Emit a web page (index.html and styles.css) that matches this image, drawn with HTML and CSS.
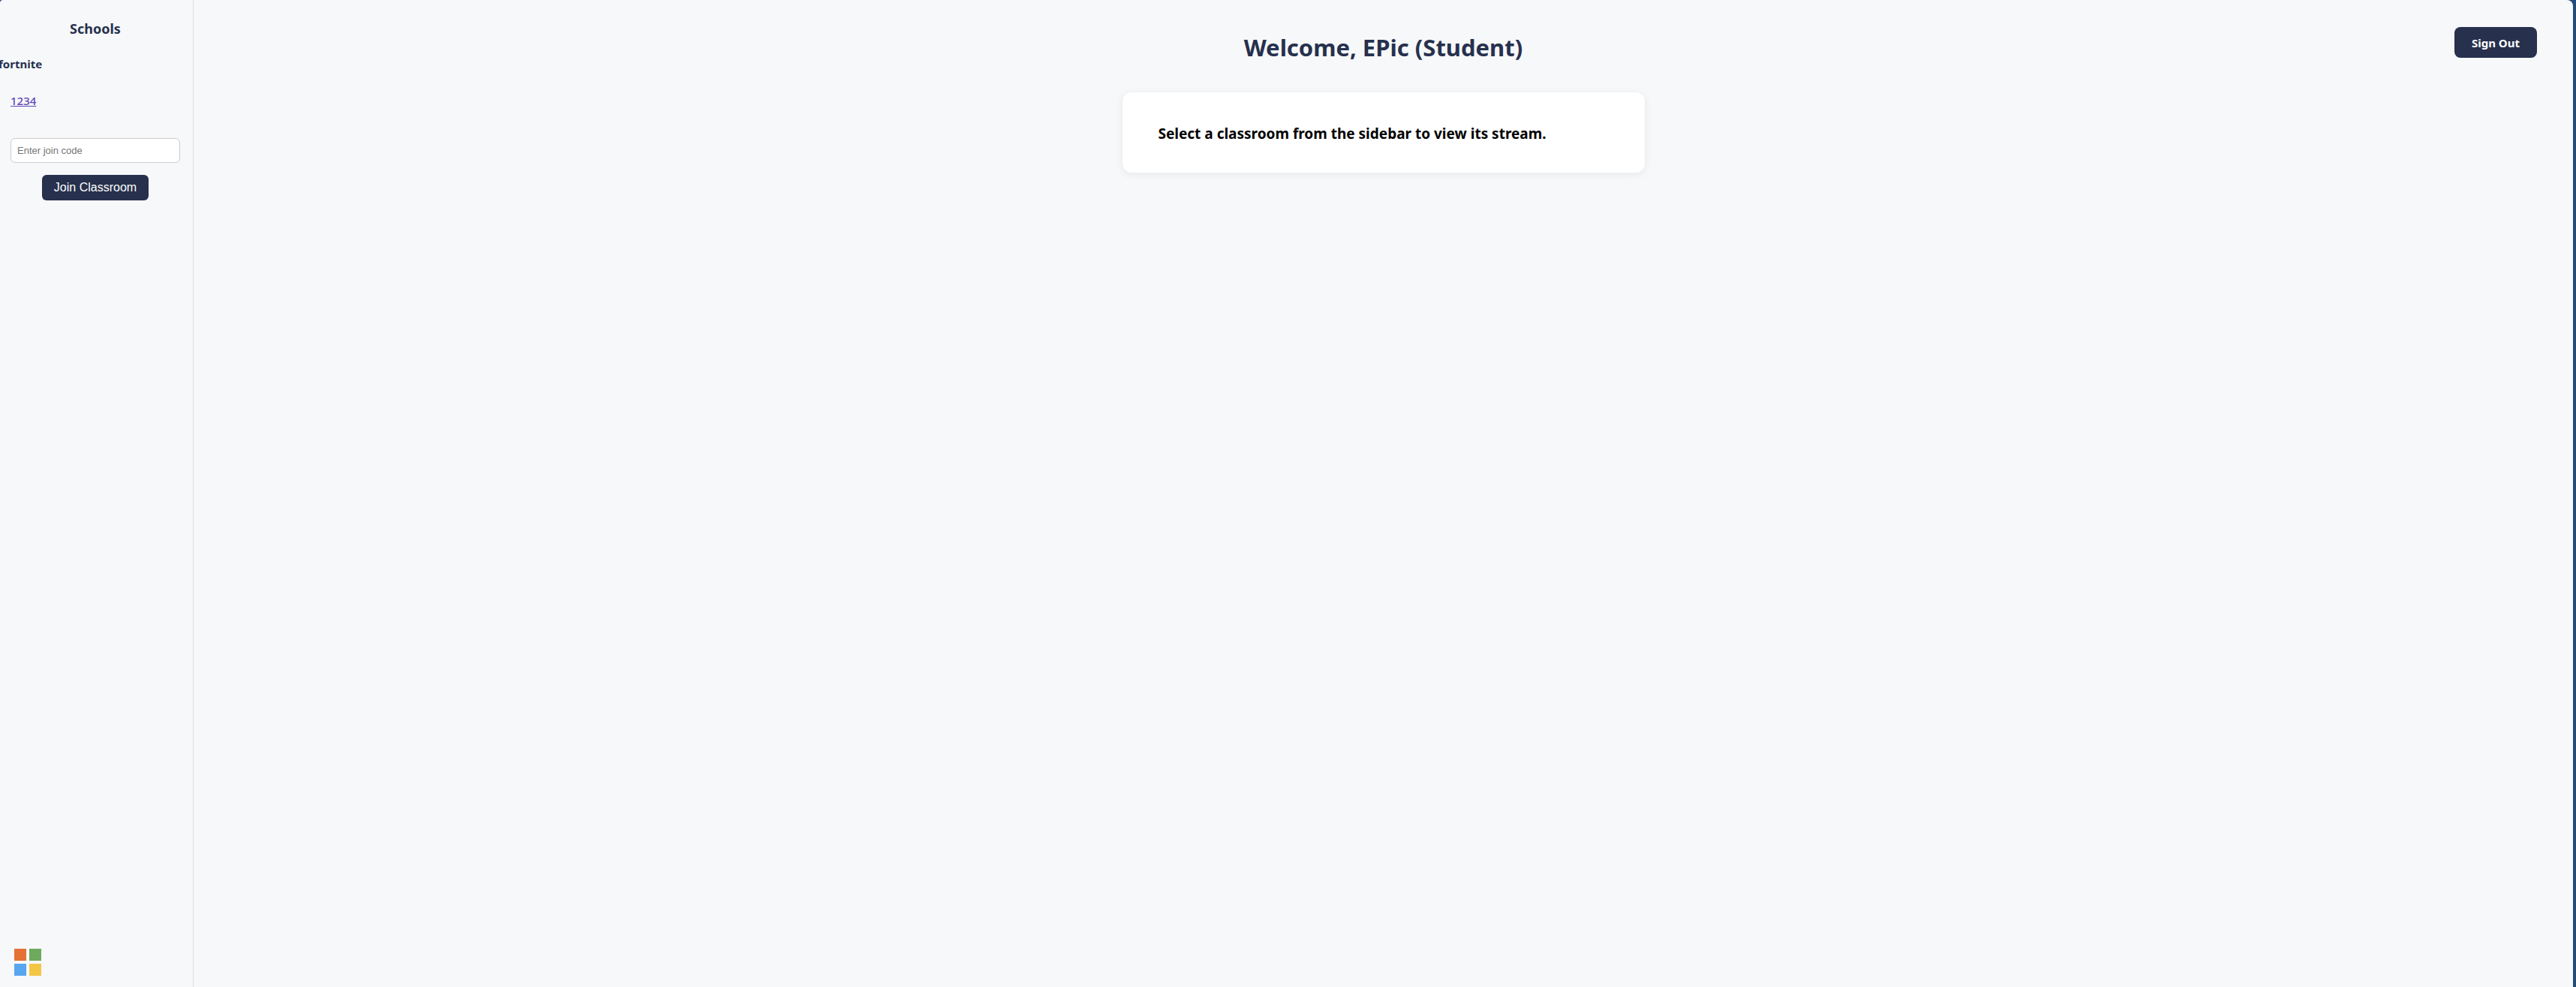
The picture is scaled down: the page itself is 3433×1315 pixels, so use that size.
FILE: index.html
```html
<!DOCTYPE html>
<html lang="en">
<head>
  <meta charset="utf-8">
  <meta name="viewport" content="width=device-width, initial-scale=1">
  <title>Classrooms</title>
  <link rel="stylesheet" href="styles.css">
</head>
<body>
  <div class="app">
    <aside class="sidebar">
      <h2 class="sidebar-title">Schools</h2>
      <h3 class="school-name">fortnite</h3>
      <nav class="classrooms">
        <a class="classroom-link" href="#classroom-1234">1234</a>
      </nav>
      <form class="join-form">
        <input class="join-input" type="text" placeholder="Enter join code" aria-label="Enter join code">
        <button class="join-button" type="button">Join Classroom</button>
      </form>
      <svg class="logo" width="36" height="36" viewBox="0 0 36 36" aria-hidden="true">
        <rect width="16" height="16" fill="#e57235"/>
        <rect x="20" width="16" height="16" fill="#6daa5d"/>
        <rect y="20" width="16" height="16" fill="#58a5f0"/>
        <rect x="20" y="20" width="16" height="16" fill="#f3c645"/>
      </svg>
    </aside>
    <main class="main">
      <header class="header">
        <h1 class="welcome">Welcome, EPic (Student)</h1>
        <button class="sign-out" type="button">Sign Out</button>
      </header>
      <section class="card">
        <h2 class="card-text">Select a classroom from the sidebar to view its stream.</h2>
      </section>
    </main>
  </div>
</body>
</html>
```
FILE: styles.css
```css
* {
  box-sizing: border-box;
}

body {
  margin: 0;
  padding-right: 4px;
  background: #244b7a;
  color: #27304d;
  font-family: "Segoe UI", "Noto Sans", sans-serif;
  font-size: 16px;
}

h1,
h2,
h3 {
  margin: 0;
}

.app {
  display: flex;
  min-height: 100vh;
  overflow: hidden;
  background: #f6f8fa;
  border-radius: 4px 8px 0 0;
}

.sidebar {
  display: flex;
  flex-direction: column;
  flex: none;
  width: 258px;
  padding: 24px 17px 15px 14px;
  border-right: 1px solid #dcdee1;
}

.sidebar-title {
  font-size: 18px;
  line-height: 28px;
  text-align: center;
}

.school-name {
  margin: 19px 0 0 -16px;
  font-size: 15px;
  line-height: 28px;
}

.classrooms {
  margin-top: 21px;
  line-height: 28px;
}

.classroom-link {
  color: #6246b8;
  font-size: 15px;
  font-weight: 500;
}

.join-form {
  display: flex;
  flex-direction: column;
  align-items: center;
  gap: 16px;
  margin-top: 36px;
}

.join-input {
  width: 100%;
  height: 33px;
  padding: 0 8px;
  border: 1px solid #ccc;
  border-radius: 6px;
  background: #fff;
  font: 13px "Liberation Sans", Arial, sans-serif;
}

.join-input::placeholder {
  color: #757575;
}

.join-button {
  height: 34px;
  padding: 0 16px;
  border: 0;
  border-radius: 6px;
  background: #27304d;
  color: #fff;
  font: 16px "Liberation Sans", Arial, sans-serif;
}

.logo {
  margin: auto 0 0 5px;
}

.main {
  flex: 1;
  padding: 36px 48px;
}

.header {
  display: grid;
  grid-template-columns: 1fr auto 1fr;
  align-items: start;
}

.welcome {
  grid-column: 2;
  padding: 3px 0 1px;
  font-size: 31px;
  line-height: 48px;
}

.sign-out {
  justify-self: end;
  height: 41px;
  padding: 0 23px;
  border: 0;
  border-radius: 8px;
  background: #27304d;
  color: #fff;
  font: bold 15px "Segoe UI", "Noto Sans", sans-serif;
}

.card {
  max-width: 696px;
  margin: 35px auto 0;
  padding: 42px 48px 38px;
  border-radius: 12px;
  background: #fff;
  box-shadow: 0 2px 12px rgba(0, 0, 0, 0.07);
}

.card-text {
  color: #000;
  font-size: 19px;
  line-height: 27px;
}
```
